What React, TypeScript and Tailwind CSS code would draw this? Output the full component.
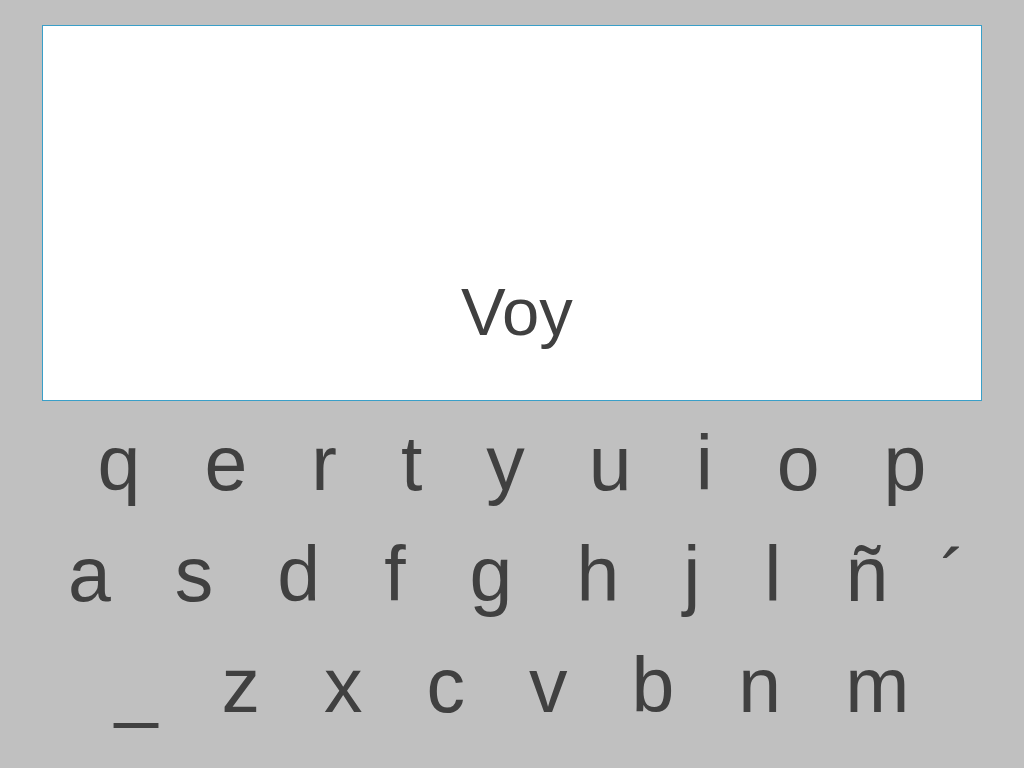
const ROW_1 = ["q", "e", "r", "t", "y", "u", "i", "o", "p"];
const ROW_2 = ["a", "s", "d", "f", "g", "h", "j", "l", "ñ"];
const ROW_3 = ["_", "z", "x", "c", "v", "b", "n", "m"];

function KeyRow({ keys, tail, className = "" }: { keys: string[]; tail?: React.ReactNode; className?: string }) {
  return (
    <div className={`flex justify-center gap-[64px] h-[111px] leading-[111px] whitespace-pre ${className}`}>
      {keys.map((k) => (
        <span key={k}>{k}</span>
      ))}
      {tail}
    </div>
  );
}

export default function App() {
  return (
    <div
      className="w-[1024px] h-[768px] bg-[#c0c0c0] flex flex-col text-[#404040] overflow-hidden"
      style={{ fontFamily: '"Liberation Sans", Arial, sans-serif' }}
    >
      {/* typed text */}
      <div className="mt-[25px] mx-[42px] h-[376px] bg-white border border-[#3a9fc8] flex flex-col justify-end items-center pb-[55px] pl-[10px]">
        <span className="text-[67px] leading-[67px]">Voy</span>
      </div>

      {/* keyboard */}
      <div className="mt-[7px] flex flex-col text-[77px]">
        <KeyRow keys={ROW_1} />
        <KeyRow
          keys={ROW_2}
          className="pl-[10px]"
          tail={<span className="-ml-[12px] relative top-[3px]">´</span>}
        />
        <KeyRow keys={ROW_3} />
      </div>
    </div>
  );
}
